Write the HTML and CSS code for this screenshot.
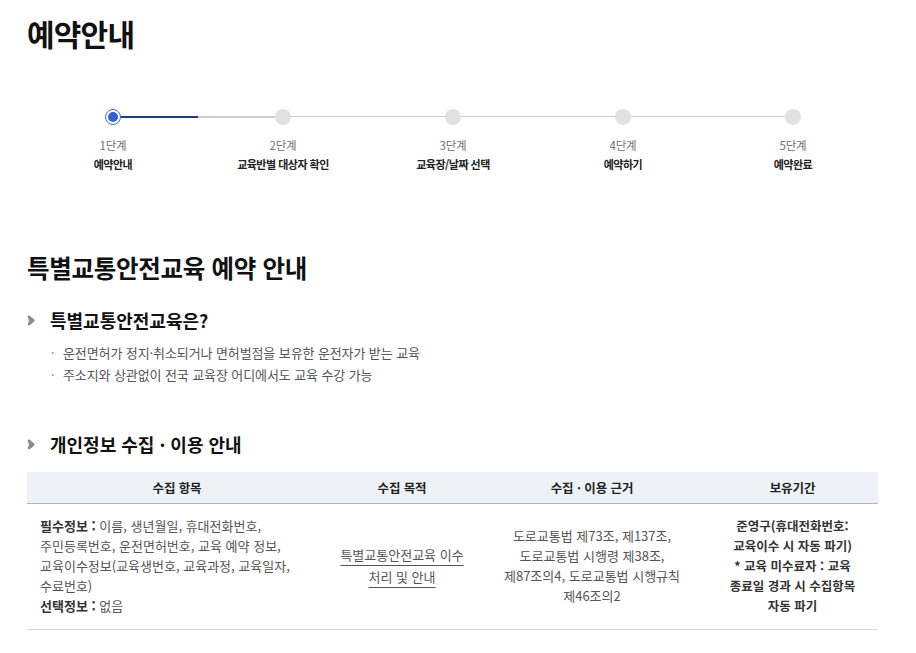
FILE: index.html
```html
<!DOCTYPE html>
<html lang="ko">
<head>
<meta charset="utf-8">
<title>예약안내</title>
<link rel="stylesheet" href="styles.css">
</head>
<body>
<div class="page">
  <h1 class="page-title">예약안내</h1>

  <ol class="steps">
    <li class="step done-half">
      <div class="dot-row"><span class="dot active"><span class="dot-inner"></span></span></div>
      <div class="step-num">1단계</div>
      <div class="step-name">예약안내</div>
    </li>
    <li class="step">
      <div class="dot-row"><span class="dot"></span></div>
      <div class="step-num">2단계</div>
      <div class="step-name">교육반별 대상자 확인</div>
    </li>
    <li class="step">
      <div class="dot-row"><span class="dot"></span></div>
      <div class="step-num">3단계</div>
      <div class="step-name">교육장/날짜 선택</div>
    </li>
    <li class="step">
      <div class="dot-row"><span class="dot"></span></div>
      <div class="step-num">4단계</div>
      <div class="step-name">예약하기</div>
    </li>
    <li class="step last">
      <div class="dot-row"><span class="dot"></span></div>
      <div class="step-num">5단계</div>
      <div class="step-name">예약완료</div>
    </li>
  </ol>

  <h2 class="section-title">특별교통안전교육 예약 안내</h2>

  <h3 class="sub-title"><svg class="chev" width="8" height="11" viewBox="0 0 8 11"><path d="M0.6 1.4 Q1 0.4 2.4 0.6 L7.3 4.5 Q8 5.5 7.3 6.5 L2.4 10.4 Q1 10.6 0.6 9.6 L2 5.5 Z" fill="#8c8c8c"/></svg>특별교통안전교육은?</h3>
  <ul class="dot-list">
    <li>운전면허가 정지·취소되거나 면허벌점을 보유한 운전자가 받는 교육</li>
    <li>주소지와 상관없이 전국 교육장 어디에서도 교육 수강 가능</li>
  </ul>

  <h3 class="sub-title second"><svg class="chev" width="8" height="11" viewBox="0 0 8 11"><path d="M0.6 1.4 Q1 0.4 2.4 0.6 L7.3 4.5 Q8 5.5 7.3 6.5 L2.4 10.4 Q1 10.6 0.6 9.6 L2 5.5 Z" fill="#8c8c8c"/></svg>개인정보 수집 · 이용 안내</h3>

  <table class="info-table">
    <colgroup>
      <col class="c1"><col class="c2"><col class="c3"><col class="c4">
    </colgroup>
    <thead>
      <tr>
        <th>수집 항목</th>
        <th>수집 목적</th>
        <th>수집 · 이용 근거</th>
        <th>보유기간</th>
      </tr>
    </thead>
    <tbody>
      <tr>
        <td class="left"><b>필수정보 :</b> 이름, 생년월일, 휴대전화번호,<br>주민등록번호, 운전면허번호, 교육 예약 정보,<br>교육이수정보(교육생번호, 교육과정, 교육일자,<br>수료번호)<br><b>선택정보 :</b> 없음</td>
        <td class="purpose"><span class="link">특별교통안전교육 이수<br>처리 및 안내</span></td>
        <td>도로교통법 제73조, 제137조,<br>도로교통법 시행령 제38조,<br>제87조의4, 도로교통법 시행규칙<br>제46조의2</td>
        <td class="strong">준영구(휴대전화번호:<br>교육이수 시 자동 파기)<br>* 교육 미수료자 : 교육<br>종료일 경과 시 수집항목<br>자동 파기</td>
      </tr>
    </tbody>
  </table>
</div>
</body>
</html>
```

FILE: styles.css
```css
* { box-sizing: border-box; }
html, body { margin: 0; padding: 0; background: #fff; }
body {
  font-family: "Noto Sans CJK KR", "Noto Sans", sans-serif;
  color: #222;
}
.page {
  width: 916px;
  padding: 12px 38px 0 27px;
}
.page-title {
  margin: 0;
  font-size: 30px;
  line-height: 42px;
  font-weight: 700;
  color: #111;
  letter-spacing: -0.8px;
}

/* steps */
.steps {
  list-style: none;
  margin: 55px 0 0 1px;
  padding: 0;
  display: flex;
  width: 850px;
}
.step {
  flex: 1 1 0;
  text-align: center;
}
.dot-row {
  position: relative;
  height: 16px;
  display: flex;
  justify-content: center;
}
.dot-row::after {
  content: "";
  position: absolute;
  left: 50%;
  width: 100%;
  top: 7px;
  height: 1px;
  background: #cccccc;
}
.done-half .dot-row::after {
  background: linear-gradient(to right, #1c3f78 0, #1c3f78 50%, #cccccc 50%, #cccccc 100%);
  height: 1.5px;
}
.last .dot-row::after { display: none; }
.dot {
  position: relative;
  z-index: 1;
  width: 16px;
  height: 16px;
  border-radius: 50%;
  background: #e1e1e1;
  display: flex;
  align-items: center;
  justify-content: center;
}
.dot.active {
  background: #fff;
  border: 1.5px solid #3b6fd8;
}
.dot-inner {
  width: 10px;
  height: 10px;
  border-radius: 50%;
  background: #2f62d6;
}
.step-num {
  margin-top: 11px;
  font-size: 11.5px;
  line-height: 18px;
  color: #707070;
  letter-spacing: -0.2px;
}
.step-name {
  margin-top: 1px;
  font-size: 11px;
  line-height: 18px;
  font-weight: 700;
  color: #222;
  letter-spacing: -0.5px;
}

/* sections */
.section-title {
  margin: 78px 0 0;
  font-size: 24.5px;
  line-height: 34px;
  font-weight: 700;
  color: #111;
  letter-spacing: -0.3px;
}
.sub-title {
  margin: 22px 0 0;
  display: flex;
  align-items: center;
  font-size: 18px;
  line-height: 26px;
  font-weight: 700;
  color: #111;
}
.sub-title.second { margin-top: 45px; }
.chev {
  margin-right: 15px;
  flex: none;
}
.dot-list {
  list-style: none;
  margin: 9px 0 0;
  padding: 0 0 0 24px;
}
.dot-list li {
  font-size: 13px;
  line-height: 22px;
  color: #555;
  display: flex;
  letter-spacing: -0.1px;
}
.dot-list li::before {
  content: "·";
  width: 12px;
  flex: none;
  color: #777;
}

/* table */
.info-table {
  margin-top: 15px;
  width: 851px;
  border-collapse: collapse;
  table-layout: fixed;
}
.c1 { width: 300px; }
.c2 { width: 150px; }
.c3 { width: 230px; }
.c4 { width: 171px; }
.info-table th {
  height: 31px;
  background: #eef2f7;
  border-bottom: 1px solid #a8b3c4;
  font-size: 12.5px;
  font-weight: 700;
  color: #222;
  padding: 0;
  letter-spacing: -0.1px;
}
.info-table td {
  padding: 12px 4px 13px;
  font-size: 13px;
  line-height: 20px;
  color: #555;
  text-align: center;
  vertical-align: middle;
  border-bottom: 1px solid #d9d9d9;
}
.info-table td.left {
  text-align: left;
  padding-left: 13px;
}
.info-table td b {
  color: #333;
  font-weight: 700;
}
.info-table td.purpose {
  line-height: 22px;
}
.link {
  text-decoration: underline;
  text-underline-offset: 5px;
  text-decoration-color: #555;
}
.info-table td.strong {
  font-size: 12.5px;
  font-weight: 700;
  color: #333;
}
```
